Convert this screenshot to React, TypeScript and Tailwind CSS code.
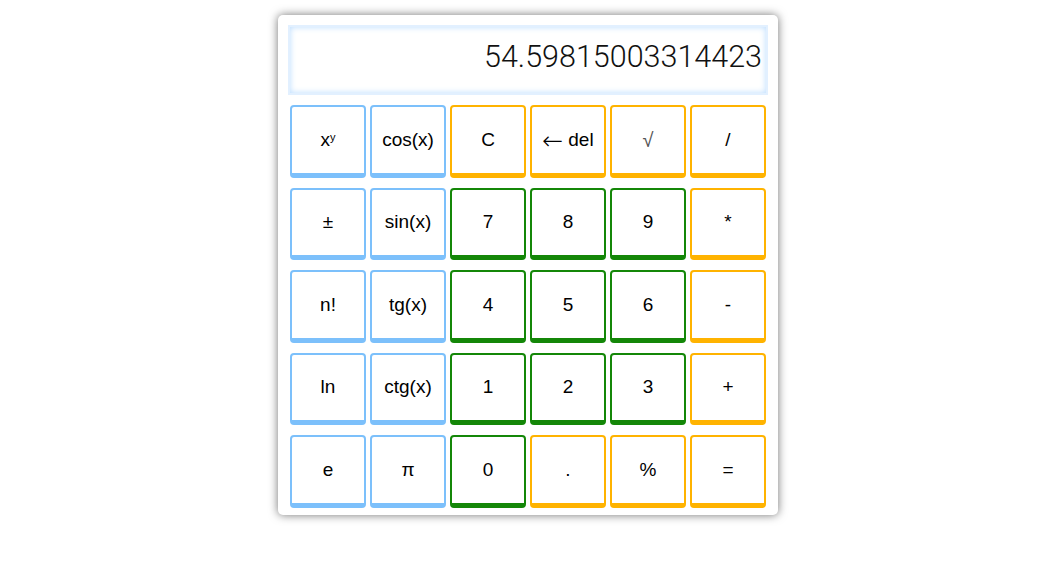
import React from 'react';

type Kind = 'fn' | 'op' | 'num';

const keys: { label: React.ReactNode; kind: Kind }[] = [
  { label: <>x<sup className="text-[11px] relative -top-[3px]">y</sup></>, kind: 'fn' },
  { label: 'cos(x)', kind: 'fn' },
  { label: 'C', kind: 'op' },
  {
    label: (
      <>
        <span className="font-['DejaVu_Sans',sans-serif] font-extralight text-[25px] leading-none relative top-[1px] mr-[5px]">←</span>del
      </>
    ),
    kind: 'op',
  },
  { label: <span className="font-['DejaVu_Sans',sans-serif] font-extralight text-[20px] text-[#555]">√</span>, kind: 'op' },
  { label: '/', kind: 'op' },
  { label: '±', kind: 'fn' },
  { label: 'sin(x)', kind: 'fn' },
  { label: '7', kind: 'num' },
  { label: '8', kind: 'num' },
  { label: '9', kind: 'num' },
  { label: '*', kind: 'op' },
  { label: 'n!', kind: 'fn' },
  { label: 'tg(x)', kind: 'fn' },
  { label: '4', kind: 'num' },
  { label: '5', kind: 'num' },
  { label: '6', kind: 'num' },
  { label: '-', kind: 'op' },
  { label: 'ln', kind: 'fn' },
  { label: 'ctg(x)', kind: 'fn' },
  { label: '1', kind: 'num' },
  { label: '2', kind: 'num' },
  { label: '3', kind: 'num' },
  { label: '+', kind: 'op' },
  { label: 'e', kind: 'fn' },
  { label: 'π', kind: 'fn' },
  { label: '0', kind: 'num' },
  { label: '.', kind: 'op' },
  { label: '%', kind: 'op' },
  { label: '=', kind: 'op' },
];

const kindClass: Record<Kind, string> = {
  fn: 'border-[#7cc0fb]',
  op: 'border-[#ffb300]',
  num: 'border-[#148708]',
};

const App: React.FC = () => {
  return (
    <div className="w-full h-[574px] bg-white flex justify-center pt-[15px] pl-[11px] font-['Liberation_Sans',Arial,sans-serif]">
      <div className="w-[500px] h-[500px] bg-white rounded-[5px] shadow-[0_0_10px_rgba(0,0,0,0.55)] pt-[10px] px-[10px]">
        <div className="h-[70px] border-[2px] border-[#e2f0ff] shadow-[inset_0_0_6px_#b9dcff] flex items-center justify-end pr-[4px] pb-[7px] font-['Roboto',sans-serif] font-light text-[30.5px] text-[#111]">
          54.59815003314423
        </div>
        <div className="mt-[10px] grid grid-cols-6 gap-y-[10px]">
          {keys.map((k, i) => (
            <button
              key={i}
              className={`mx-[2px] h-[72.5px] bg-white rounded-[4px] border-2 border-b-[5px] ${kindClass[k.kind]} flex items-center justify-center text-[19px] text-black`}
            >
              {k.label}
            </button>
          ))}
        </div>
      </div>
    </div>
  );
};

export default App;
